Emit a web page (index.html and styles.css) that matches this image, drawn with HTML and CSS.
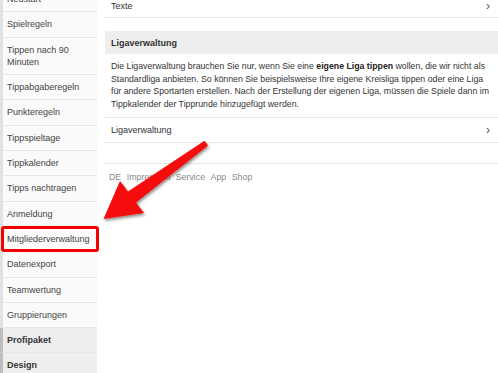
FILE: index.html
```html
<!DOCTYPE html>
<html lang="de">
<head>
<meta charset="utf-8">
<link rel="stylesheet" href="styles.css">
</head>
<body>
<div class="page">
  <nav class="sidebar">
    <a class="item">Neustart</a>
    <a class="item">Spielregeln</a>
    <a class="item">Tippen nach 90 Minuten</a>
    <a class="item">Tippabgaberegeln</a>
    <a class="item">Punkteregeln</a>
    <a class="item">Tippspieltage</a>
    <a class="item">Tippkalender</a>
    <a class="item">Tipps nachtragen</a>
    <a class="item">Anmeldung</a>
    <a class="item marked">Mitgliederverwaltung</a>
    <a class="item">Datenexport</a>
    <a class="item">Teamwertung</a>
    <a class="item">Gruppierungen</a>
    <a class="item group">Profipaket</a>
    <a class="item group">Design</a>
  </nav>
  <main class="content">
    <a class="row"><span>Texte</span><span class="chev">&#x203A;</span></a>
    <section class="panel">
      <h2 class="panel-title">Ligaverwaltung</h2>
      <p class="panel-text">Die Ligaverwaltung brauchen Sie nur, wenn Sie eine <b>eigene Liga tippen</b> wollen, die wir nicht als Standardliga anbieten. So können Sie beispielsweise Ihre eigene Kreisliga tippen oder eine Liga für andere Sportarten erstellen. Nach der Erstellung der eigenen Liga, müssen die Spiele dann im Tippkalender der Tipprunde hinzugefügt werden.</p>
      <a class="row bordered"><span>Ligaverwaltung</span><span class="chev">&#x203A;</span></a>
    </section>
    <footer class="footer">
      <span>DE</span><span>Impressum</span><span>Service</span><span>App</span><span>Shop</span>
    </footer>
  </main>
</div>
<svg class="arrow" width="498" height="373" viewBox="0 0 498 373">
  <defs>
    <filter id="sh" x="-20%" y="-20%" width="140%" height="140%">
      <feDropShadow dx="1" dy="2" stdDeviation="1.5" flood-color="#000" flood-opacity="0.45"/>
    </filter>
  </defs>
  <polygon filter="url(#sh)" fill="#f50a0a" points="208,145.5 204.5,140.8 128,191.5 120,181 103.5,219 144,213 136,202.5"/>
</svg>
</body>
</html>
```

FILE: styles.css
```css
html, body {
  margin: 0;
  padding: 0;
  background: #fff;
}
body {
  font-family: "Liberation Sans", Arial, sans-serif;
  color: #333;
  overflow: hidden;
  width: 498px;
  height: 373px;
  position: relative;
}
.page {
  display: flex;
  align-items: flex-start;
  gap: 8px;
  margin-top: -13px;
}
.sidebar {
  width: 97px;
  flex: none;
  display: flex;
  flex-direction: column;
  background: #fafafa;
  border-left: 3px solid #e2e2e2;
  box-sizing: border-box;
}
.item {
  display: block;
  font-size: 9px;
  line-height: 12.3px;
  padding: 6px 4px 6px 4px;
  border-bottom: 1px solid #e6e6e6;
  color: #444;
}
.item.marked {
  position: relative;
}
.item.marked::after {
  content: "";
  position: absolute;
  left: -2px;
  right: -2px;
  top: -1px;
  bottom: -1px;
  border: 3px solid #f50000;
  border-radius: 3px;
}
.item.group {
  background: #eeeeee;
  font-weight: bold;
  color: #333;
  margin-left: -3px;
  border-left: 3px solid #bdbdbd;
}
.content {
  flex: 1;
  padding-top: 13px;
}
.row {
  display: flex;
  justify-content: space-between;
  align-items: center;
  font-size: 9px;
  line-height: 12px;
  padding: 0 6px 5px 6px;
  border-bottom: 1px solid #e6e6e6;
  color: #333;
}
.chev {
  font-size: 12px;
  color: #555;
  margin-right: 2px;
}
.panel {
  margin-top: 13px;
}
.panel-title {
  margin: 0;
  background: #eeeeee;
  font-size: 9px;
  line-height: 12px;
  padding: 6px 6px 5px 6px;
  font-weight: bold;
  color: #333;
}
.panel-text {
  margin: 0;
  padding: 6px 4px 7px 6px;
  font-size: 8.75px;
  line-height: 12.6px;
  color: #333;
}
.panel-text b {
  color: #222;
}
.row.bordered {
  border-top: 1px solid #e6e6e6;
  padding: 6px 6px 6px 6px;
}
.footer {
  margin-top: 20px;
  border-top: 1px solid #e6e6e6;
  padding: 7px 4px;
  display: flex;
  gap: 5.5px;
  font-size: 8.8px;
  line-height: 12px;
  color: #888;
}
.arrow {
  position: absolute;
  left: 0;
  top: 0;
  pointer-events: none;
}
```
